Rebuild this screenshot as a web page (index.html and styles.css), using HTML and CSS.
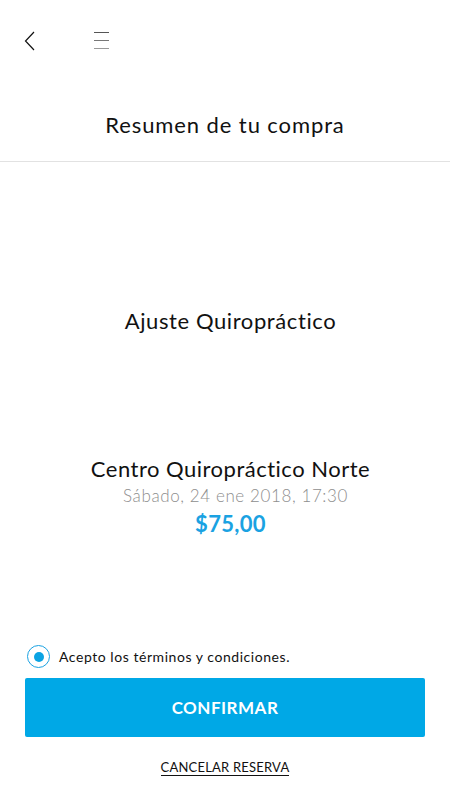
FILE: index.html
```html
<!DOCTYPE html>
<html lang="es">
<head>
<meta charset="utf-8">
<link rel="stylesheet" href="styles.css">
</head>
<body>
<div class="screen">
  <header class="topbar">
    <svg class="icon back" width="12" height="20" viewBox="0 0 12 20"><path d="M10 1 L1.5 10 L10 19" fill="none" stroke="#111" stroke-width="1.2"/></svg>
    <svg class="icon menu" width="16" height="18" viewBox="0 0 16 18"><path d="M0 1.5 H15" stroke="#555" stroke-width="1"/><path d="M0 9.5 H15" stroke="#777" stroke-width="1"/><path d="M0 17.5 H15" stroke="#999" stroke-width="1"/></svg>
  </header>
  <h1 class="title">Resumen de tu compra</h1>
  <main class="content">
    <p class="service">Ajuste Quiropráctico</p>
    <div class="details">
      <p class="place">Centro Quiropráctico Norte</p>
      <p class="date">Sábado, 24 ene 2018, 17:30</p>
      <p class="price">$75,00</p>
    </div>
  </main>
  <footer class="actions">
    <label class="terms"><span class="radio"><span class="dot"></span></span>Acepto los términos y condiciones.</label>
    <button class="confirm">CONFIRMAR</button>
    <a class="cancel">CANCELAR RESERVA</a>
  </footer>
</div>
</body>
</html>
```
FILE: styles.css
```css
* { box-sizing: border-box; }
html, body { margin: 0; padding: 0; background: #fff; }
body { font-family: "Lato", "Open Sans", sans-serif; color: #111; }
.screen { width: 450px; height: 800px; display: flex; flex-direction: column; }
.topbar { height: 82px; display: flex; align-items: flex-start; padding: 31px 0 0 24px; gap: 58px; }
.icon { display: block; }
.title { margin: 0; font-weight: 400; font-size: 22px; letter-spacing: 0.9px; text-align: center; height: 80px; padding-top: 29px; border-bottom: 1px solid #e2e2e2; line-height: 28px; }
.content { flex: 1; display: flex; flex-direction: column; align-items: center; padding-left: 11px; }
.service { margin: 145px 0 0; font-size: 22px; letter-spacing: 0.6px; line-height: 28px; }
.details { margin-top: 120px; text-align: center; display: flex; flex-direction: column; align-items: center; }
.place { margin: 0; font-size: 22px; letter-spacing: 0.5px; line-height: 28px; }
.date { margin: 0 0 0 10px; font-size: 17px; font-weight: 300; letter-spacing: 0.6px; color: #8e8e8e; line-height: 26px; }
.price { margin: 0; font-size: 22px; font-weight: 700; letter-spacing: 0.3px; color: #1aa2e2; line-height: 30px; }
.actions { display: flex; flex-direction: column; align-items: center; padding: 0 25px 24px; }
.terms { align-self: flex-start; display: flex; align-items: center; gap: 9px; font-size: 14px; letter-spacing: 0.55px; padding-left: 2px; margin-bottom: 10px; }
.radio { width: 23px; height: 23px; border: 1.5px solid #1aa2e2; border-radius: 50%; display: flex; align-items: center; justify-content: center; }
.dot { width: 10px; height: 10px; border-radius: 50%; background: #0aa3e3; }
.confirm { width: 400px; height: 59px; border: none; border-radius: 2px; background: #00a8e6; color: #fff; font-family: inherit; font-size: 17px; font-weight: 700; letter-spacing: 0.5px; }
.cancel { margin-top: 22px; font-size: 13px; letter-spacing: 0.2px; color: #111; text-decoration: none; border-bottom: 1.5px solid #111; line-height: 16px; }
```
